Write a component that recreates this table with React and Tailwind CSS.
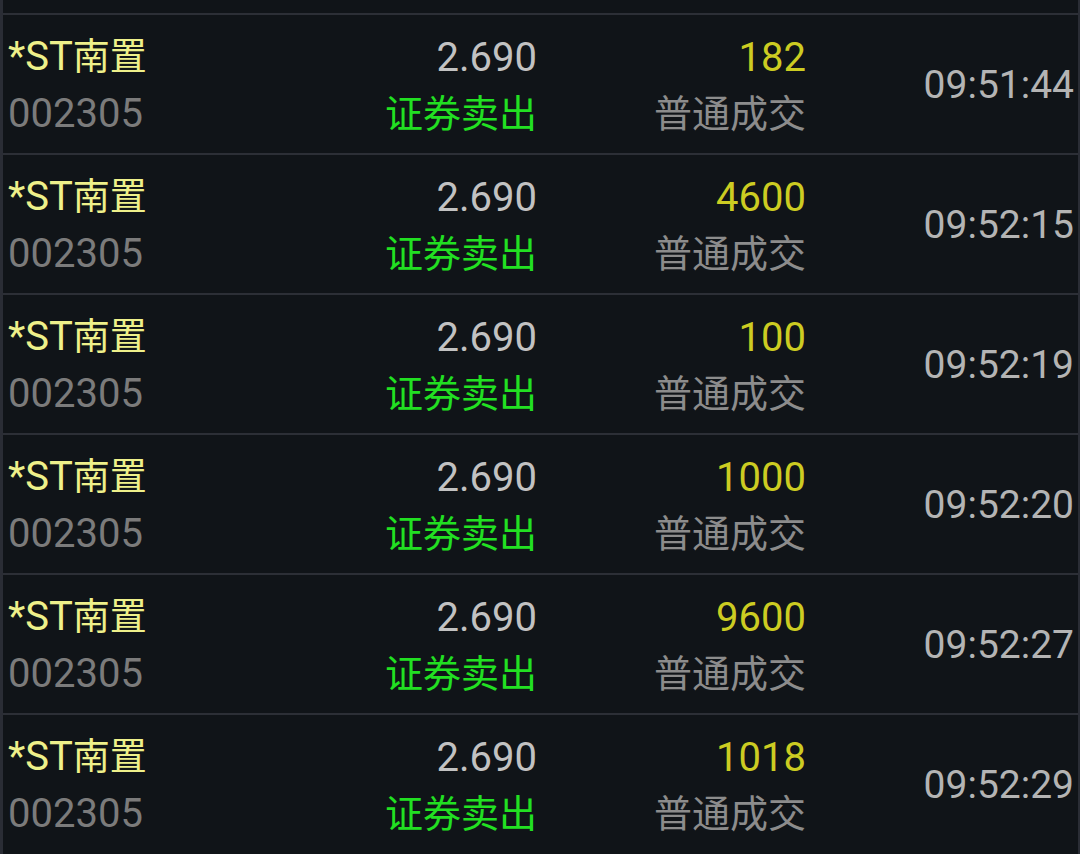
const trades = [
  { vol: '182', time: '09:51:44' },
  { vol: '4600', time: '09:52:15' },
  { vol: '100', time: '09:52:19' },
  { vol: '1000', time: '09:52:20' },
  { vol: '9600', time: '09:52:27' },
  { vol: '1018', time: '09:52:29' },
]

function TradeRow({ trade }) {
  return (
    <div className="flex h-[140px] shrink-0 items-center border-t-2 border-[#2c2f36] pl-[5px] pr-[4px] pt-[3px]">
      <div className="flex w-[300px] flex-col leading-[56px]">
        <span className="text-[40px] text-[#eef08a]">
          *ST<span className="text-[37px]">南置</span>
        </span>
        <span className="text-[40px] text-[#7b7b7b]">002305</span>
      </div>
      <div className="flex w-[229px] flex-col items-end leading-[56px]">
        <span className="text-[40px] text-[#c2c2c2]">2.690</span>
        <span className="text-[38px] text-[#22e022]">证券卖出</span>
      </div>
      <div className="flex w-[269px] flex-col items-end leading-[56px]">
        <span className="text-[40px] text-[#cccc22]">{trade.vol}</span>
        <span className="text-[38px] text-[#8c8c8c]">普通成交</span>
      </div>
      <div className="flex-1 text-right text-[39px] text-[#b4b4b4]">{trade.time}</div>
    </div>
  )
}

export default function App() {
  return (
    <div
      className="flex h-[854px] w-[1080px] flex-col overflow-hidden border-l-[3px] border-r-2 border-[#2a2d35] bg-[#101418] pt-[13px]"
      style={{ fontFamily: "Roboto, 'Noto Sans CJK SC', sans-serif" }}
    >
      {trades.map((trade) => (
        <TradeRow key={trade.time} trade={trade} />
      ))}
    </div>
  )
}
